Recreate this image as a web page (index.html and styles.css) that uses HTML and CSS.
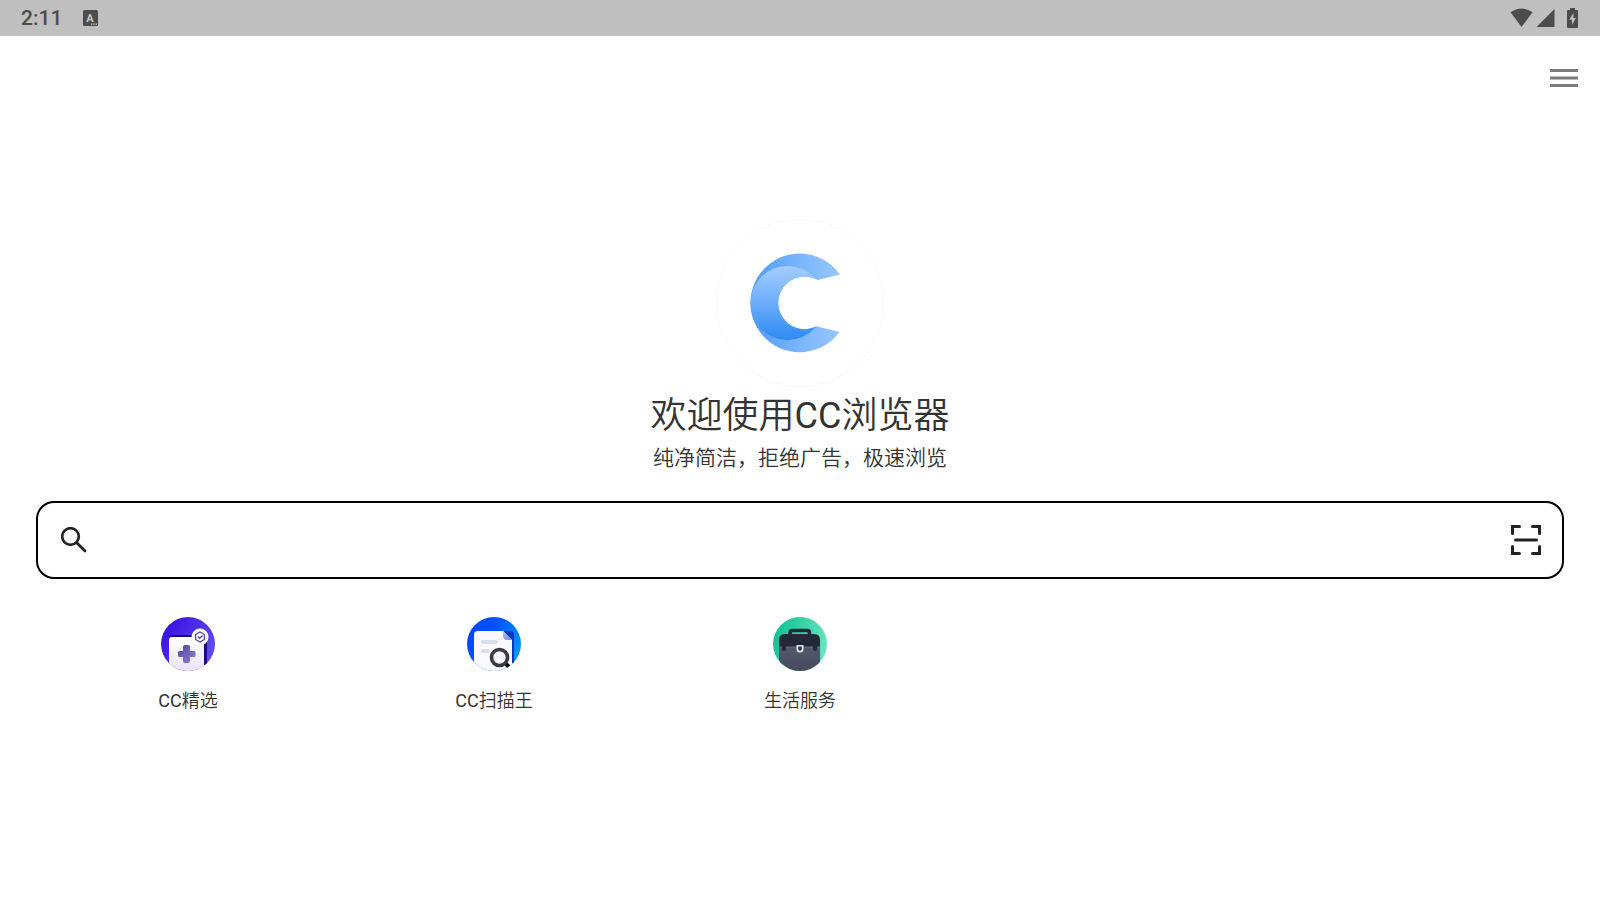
FILE: index.html
```html
<!DOCTYPE html>
<html lang="zh-CN">

<head>
  <meta charset="UTF-8">
  <meta name="viewport" content="width=device-width, initial-scale=1.0">
  <link rel="stylesheet" href="styles.css">
  <title>CC浏览器</title>
</head>

<body>
  <!-- Status bar -->
  <header class="status-bar">
    <span class="time">2:11</span>
    <svg class="keyboard-icon" width="16" height="16" viewBox="0 0 16 16">
      <rect width="15" height="16" rx="1.5" fill="#4c4c4c"/>
      <text class="keyboard-letter" x="7" y="12" text-anchor="middle">A</text>
      <path d="M8 14.2h1.4M10.3 14.2h1.4M12.5 14.2h1.4" stroke="#c8c8c8" stroke-width="1.2"/>
    </svg>
    <div class="status-icons">
      <svg width="23" height="20" viewBox="0 0 23 20">
        <path d="M0.5 4.3Q11.5 -3.3 22.5 4.3L11.5 19Z" fill="#4c4c4c"/>
      </svg>
      <svg width="19" height="20" viewBox="0 0 19 20">
        <path d="M18.5 1V19H0.5Z" fill="#4c4c4c"/>
      </svg>
      <svg class="battery" width="11" height="20" viewBox="0 0 11 20">
        <path d="M3 0h5v2h2q1 0 1 1v16q0 1-1 1H1q-1 0-1-1V3q0-1 1-1h2z" fill="#4c4c4c"/>
        <path d="M6.4 5L2.3 11.8H5V17L8.9 10H6.4Z" fill="#c0c0c0"/>
      </svg>
    </div>
  </header>

  <nav class="toolbar">
    <button class="icon-button" type="button" aria-label="菜单">
      <svg width="28" height="18" viewBox="0 0 28 18">
        <path d="M0 1.5h28M0 9h28M0 16.5h28" stroke="#7b7b7b" stroke-width="2.8"/>
      </svg>
    </button>
  </nav>

  <main class="content">
    <svg class="logo" width="168" height="168" viewBox="0 0 168 168">
      <defs>
        <linearGradient id="ring" x1="0" y1="0" x2="1" y2="0">
          <stop offset="0" stop-color="#4b9af7"/>
          <stop offset="0.55" stop-color="#7ab5fd"/>
          <stop offset="1" stop-color="#98c7ff"/>
        </linearGradient>
        <linearGradient id="crescent" x1="0" y1="0" x2="0" y2="1">
          <stop offset="0" stop-color="#a5cdff"/>
          <stop offset="0.5" stop-color="#6badfb"/>
          <stop offset="1" stop-color="#2f8af2"/>
        </linearGradient>
        <clipPath id="c-shape">
          <path d="M124 55.5A49.3 49.3 0 1 0 123.5 113L100.5 107.3A26.3 26.3 0 1 1 101.5 61Z"/>
        </clipPath>
      </defs>
      <circle cx="84" cy="84" r="83.5" fill="#fff" stroke="#fbf9fa"/>
      <g clip-path="url(#c-shape)">
        <rect x="34" y="34" width="91" height="100" fill="url(#ring)"/>
        <circle cx="71.5" cy="84" r="37" fill="url(#crescent)"/>
      </g>
    </svg>
    <h1 class="title">欢迎使用<span class="latin">CC</span>浏览器</h1>
    <p class="subtitle">纯净简洁，拒绝广告，极速浏览</p>

    <form class="search-box">
      <button class="icon-button" type="submit" aria-label="搜索">
        <svg width="26" height="26" viewBox="0 0 26 26">
          <circle cx="9.5" cy="9.5" r="8.3" fill="none" stroke="#222" stroke-width="2.7"/>
          <path d="M16 16L24 24" stroke="#222" stroke-width="2.8" stroke-linecap="round"/>
        </svg>
      </button>
      <input class="search-input" type="text" aria-label="搜索或输入网址">
      <button class="icon-button" type="button" aria-label="扫一扫">
        <svg width="30" height="30" viewBox="0 0 30 30">
          <path d="M1.5 8.5V1.5H8.5M21.5 1.5H28.5V8.5M28.5 21.5V28.5H21.5M8.5 28.5H1.5V21.5M4.5 15H25.5" fill="none" stroke="#222" stroke-width="3" stroke-linecap="round"/>
        </svg>
      </button>
    </form>

    <!-- Shortcuts, five per row -->
    <div class="shortcuts">
      <a class="shortcut" href="#">
        <svg width="54" height="54" viewBox="0 0 54 54">
          <defs>
            <linearGradient id="purple" x1="0" y1="0" x2="1" y2="0.6">
              <stop offset="0" stop-color="#3409dc"/>
              <stop offset="1" stop-color="#604df0"/>
            </linearGradient>
            <linearGradient id="card" x1="0" y1="0" x2="0" y2="1">
              <stop offset="0" stop-color="#fff"/>
              <stop offset="1" stop-color="#e9e3fb"/>
            </linearGradient>
            <linearGradient id="plus" x1="0" y1="0" x2="1" y2="1">
              <stop offset="0" stop-color="#5146a0"/>
              <stop offset="1" stop-color="#9180d0"/>
            </linearGradient>
            <clipPath id="round"><circle cx="27" cy="27" r="27"/></clipPath>
          </defs>
          <g clip-path="url(#round)">
            <rect width="54" height="54" fill="url(#purple)"/>
            <path d="M11 18H43Q46 18 46 21V48H38V22H8Q8 18 11 18Z" fill="#1e0a86"/>
            <path d="M8 54V23Q8 20 11 20H40Q43 20 43 23V54Z" fill="url(#card)"/>
            <path d="M22 30q0-2 2-2h3q2 0 2 2v4h4q1.5 0 1.5 1.5v3q0 1.5-1.5 1.5h-4v4q0 2-2 2h-3q-2 0-2-2v-4h-3.5q-1.5 0-1.5-1.5v-3q0-1.5 1.5-1.5H22z" fill="url(#plus)"/>
            <circle cx="39" cy="20" r="8.5" fill="#fff"/>
            <path d="M39 15L43.4 17.5V22.5L39 25L34.6 22.5V17.5Z" fill="none" stroke="#5546a8" stroke-width="1.3" stroke-linejoin="round"/>
            <path d="M36.8 19.5L38.6 21.3L41.5 18.5" fill="none" stroke="#5546a8" stroke-width="1.3"/>
          </g>
        </svg>
        <span><span class="latin">CC</span>精选</span>
      </a>
      <a class="shortcut" href="#">
        <svg width="54" height="54" viewBox="0 0 54 54">
          <defs>
            <linearGradient id="blue" x1="0" y1="0" x2="1" y2="0.5">
              <stop offset="0" stop-color="#0040ff"/>
              <stop offset="0.5" stop-color="#0055ff"/>
              <stop offset="1" stop-color="#0090ff"/>
            </linearGradient>
            <linearGradient id="fold" x1="0" y1="0" x2="1" y2="1">
              <stop offset="0" stop-color="#b6c2f2"/>
              <stop offset="1" stop-color="#7387d8"/>
            </linearGradient>
          </defs>
          <g clip-path="url(#round)">
            <rect width="54" height="54" fill="url(#blue)"/>
            <path d="M34 14H44Q47 14 47 17V46H40Z" fill="#0636ba"/>
            <path d="M7 54V18Q7 14 11 14H36L45 23V54Z" fill="#fafafe"/>
            <path d="M36 14V19Q36 23 40 23H45Z" fill="url(#fold)"/>
            <path d="M16 25H29M16 34H21" stroke="#dadfef" stroke-width="4" stroke-linecap="round"/>
            <path d="M38 46L42 50" stroke="#141414" stroke-width="4"/>
            <circle cx="32.5" cy="40.5" r="8" fill="#f4f4fa" stroke="#3b3c40" stroke-width="3.6"/>
            <path d="M40.5 46L42.8 48.3L40.5 50.6L38.2 48.3Z" fill="#000"/>
          </g>
        </svg>
        <span><span class="latin">CC</span>扫描王</span>
      </a>
      <a class="shortcut" href="#">
        <svg width="54" height="54" viewBox="0 0 54 54">
          <defs>
            <linearGradient id="green" x1="0" y1="0.3" x2="1" y2="0.6">
              <stop offset="0" stop-color="#10c294"/>
              <stop offset="1" stop-color="#6ce4be"/>
            </linearGradient>
            <linearGradient id="bag" x1="0" y1="0" x2="0" y2="1">
              <stop offset="0" stop-color="#555a70"/>
              <stop offset="1" stop-color="#44495d"/>
            </linearGradient>
          </defs>
          <g clip-path="url(#round)">
            <rect width="54" height="54" fill="url(#green)"/>
            <path d="M17 19V16Q17 13.5 19.5 13.5H34Q36.5 13.5 36.5 16V19" fill="none" stroke="#242838" stroke-width="3.6"/>
            <rect x="6" y="28" width="41" height="26" fill="url(#bag)"/>
            <path d="M6 30V23Q6 17 12 17H41Q47 17 47 23V30Z" fill="#242838"/>
            <path d="M6 30H47" stroke="#707489" stroke-width="0.8"/>
            <path d="M9 29h4v3q0 2-2 2t-2-2zM40 29h4v3q0 2-2 2t-2-2z" fill="#242838"/>
            <path d="M23.5 28H30.5V32Q30.5 35.5 27 35.5Q23.5 35.5 23.5 32Z" fill="#e4e6f0"/>
            <path d="M25.3 29.5H28.7V32Q28.7 33.8 27 33.8Q25.3 33.8 25.3 32Z" fill="#242838"/>
          </g>
        </svg>
        <span>生活服务</span>
      </a>
    </div>
  </main>
</body>

</html>
```

FILE: styles.css
```css
body {
  margin: 0;
  background-color: #fff;
  color: #333;
  font-family: Roboto, "Noto Sans CJK SC", sans-serif;
  font-weight: 350;
}

svg {
  display: block;
}

/* Roboto has no 350 weight, keep it regular beside the Chinese text */
.latin {
  font-weight: 400;
}

.status-bar {
  display: flex;
  align-items: center;
  box-sizing: border-box;
  height: 36px;
  padding: 0 22px 0 21px;
  background-color: #bfbfbf;
}

.time {
  color: #4c4c4c;
  font-size: 21px;
  font-weight: 500;
  line-height: 36px;
}

.keyboard-icon {
  margin-left: 21px;
}

.keyboard-letter {
  fill: #c8c8c8;
  font-size: 11px;
  font-weight: 700;
}

.status-icons {
  display: flex;
  gap: 3px;
  margin-left: auto;
}

.battery {
  margin-left: 9px;
}

.icon-button {
  flex: none;
  padding: 0;
  border: none;
  background: none;
  cursor: pointer;
}

.toolbar {
  display: flex;
  justify-content: flex-end;
  padding: 33px 22px;
}

.content {
  display: flex;
  flex-direction: column;
  align-items: center;
  padding-top: 99px;
}

.title {
  margin: 2px 0 0;
  font-size: 36px;
  font-weight: inherit;
  line-height: 54px;
}

.subtitle {
  margin: 0;
  font-size: 21px;
  line-height: 30px;
}

.search-box {
  display: flex;
  align-items: center;
  align-self: stretch;
  gap: 20px;
  box-sizing: border-box;
  height: 78px;
  margin: 28px 36px 0;
  padding: 0 21px 0 23px;
  border: 2px solid #000;
  border-radius: 18px;
}

.search-input {
  flex: 1;
  min-width: 0;
  height: 48px;
  padding: 0;
  border: none;
  outline: none;
  background: none;
  color: #333;
  font-family: inherit;
  font-size: 21px;
}

.shortcuts {
  display: grid;
  grid-template-columns: repeat(5, 1fr);
  align-self: stretch;
  padding: 38px 35px 0;
}

.shortcut {
  display: flex;
  flex-direction: column;
  align-items: center;
  gap: 16px;
  color: #333;
  font-size: 18px;
  line-height: 27px;
  text-decoration: none;
}
```
